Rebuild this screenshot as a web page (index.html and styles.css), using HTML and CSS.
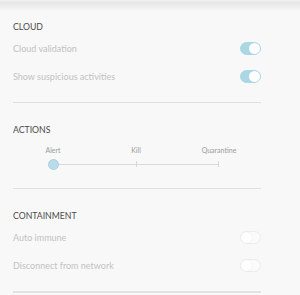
FILE: index.html
```html
<!DOCTYPE html>
<html>
<head>
<meta charset="utf-8">
<link rel="stylesheet" href="styles.css">
</head>
<body>
<div class="panel">
  <section class="section">
    <h2 class="heading">CLOUD</h2>
    <div class="row"><span class="label">Cloud validation</span><span class="toggle on"></span></div>
    <div class="row"><span class="label">Show suspicious activities</span><span class="toggle on"></span></div>
  </section>
  <section class="section">
    <h2 class="heading">ACTIONS</h2>
    <div class="slider">
      <div class="slider-labels"><span>Alert</span><span>Kill</span><span>Quarantine</span></div>
      <div class="track"><span class="tick mid"></span><span class="tick end"></span><span class="knob"></span></div>
    </div>
  </section>
  <section class="section last">
    <h2 class="heading">CONTAINMENT</h2>
    <div class="row"><span class="label">Auto immune</span><span class="toggle"></span></div>
    <div class="row"><span class="label">Disconnect from network</span><span class="toggle"></span></div>
  </section>
</div>
</body>
</html>
```
FILE: styles.css
```css
html, body {
  margin: 0;
  padding: 0;
}
body {
  width: 300px;
  height: 295px;
  overflow: hidden;
  background: linear-gradient(to bottom, #f0f0f0 0, #e6e6e6 3px, #f8f8f8 11px) no-repeat, #f8f8f8;
  background-size: 100% 12px;
  background-color: #f8f8f8;
  font-family: Lato, "Open Sans", sans-serif;
}
.panel {
  padding: 0 39px 0 13px;
}
.section {
  padding: 20px 0 12px;
  border-bottom: 1px solid #e0e0e0;
}
.section.last {
  border-bottom: 2px solid #e2e2e2;
}
.heading {
  margin: 0;
  font-size: 8.7px;
  line-height: 14px;
  font-weight: 400;
  color: #4a4a4a;
  letter-spacing: 0;
}
.row {
  height: 28px;
  display: flex;
  align-items: center;
  justify-content: space-between;
}
.label {
  font-size: 9px;
  color: #c2c2c2;
}
.toggle {
  position: relative;
  width: 21px;
  height: 13px;
  box-sizing: border-box;
  border-radius: 7px;
  background: #fbfbfb;
  border: 1px solid #ececec;
}
.toggle::after {
  content: "";
  position: absolute;
  top: 0;
  left: 0;
  width: 11px;
  height: 11px;
  border-radius: 50%;
  background: #fff;
  box-shadow: 0 0 1px rgba(0,0,0,0.12);
}
.toggle.on {
  background: #abd6e3;
  border-color: #abd6e3;
}
.toggle.on::after {
  left: 8px;
  box-shadow: none;
}
.slider {
  padding: 8px 0 3px;
}
.slider-labels {
  display: grid;
  grid-template-columns: repeat(3, 83px);
  margin-left: -1.5px;
  font-size: 7px;
  line-height: 10px;
  color: #9a9a9a;
  text-align: center;
}
.track {
  position: relative;
  margin-left: 40px;
  width: 166px;
  height: 18px;
  background: linear-gradient(#dadada, #dadada) center / 100% 1px no-repeat;
}
.tick {
  position: absolute;
  top: 6px;
  width: 1px;
  height: 6px;
  background: #d8d8d8;
}
.tick.mid { left: 83px; }
.tick.end { left: 165px; }
.knob {
  position: absolute;
  left: -5.5px;
  top: 3.5px;
  width: 11px;
  height: 11px;
  box-sizing: border-box;
  border-radius: 50%;
  background: #b9dcea;
  border: 1px solid #a9d1e1;
}
```
